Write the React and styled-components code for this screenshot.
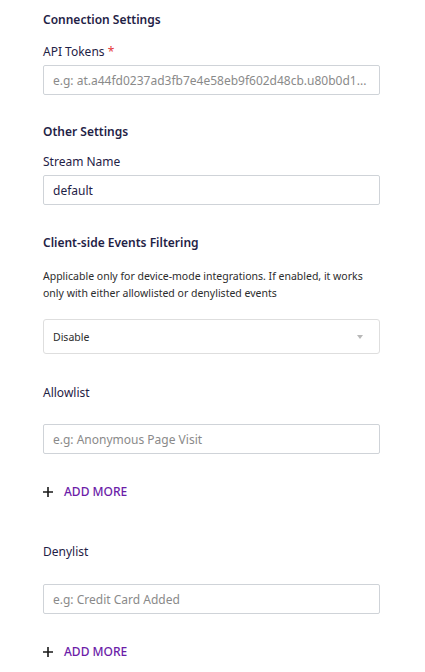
import styled, { createGlobalStyle } from 'styled-components';

const GlobalStyle = createGlobalStyle`
	body {
		margin: 0;
		background: #fff;
		font-family: 'Noto Sans', 'Open Sans', sans-serif;
		color: #1f2246;
	}
`;

const Page = styled.div`
	width: 337px;
	padding: 11px 0 0 43px;
	display: flex;
	flex-direction: column;
`;

const Heading = styled.h3`
	margin: 0;
	font-size: 12px;
	font-weight: 600;
	line-height: 18px;
	color: #1f2246;
	margin-top: ${(p) => p.top || 0}px;
`;

const Label = styled.div`
	font-size: 12px;
	font-weight: 400;
	line-height: 18px;
	color: #1f2246;
	margin-top: ${(p) => p.top || 0}px;
	margin-bottom: ${(p) => p.bottom || 4}px;
`;

const Required = styled.span`
	color: #e5373b;
`;

const Description = styled.p`
	margin: 16px 0 0;
	font-size: 10.5px;
	line-height: 17px;
	color: #2c2c2c;
`;

const Input = styled.input`
	box-sizing: border-box;
	width: 337px;
	height: 30px;
	border: 1px solid #cfd3d8;
	border-radius: 2px;
	padding: 0 9px;
	font-family: inherit;
	font-size: 12px;
	color: #1f2246;
	outline: none;
	text-overflow: ellipsis;
	&::placeholder {
		color: #8a8a8a;
	}
`;

const Select = styled.div`
	box-sizing: border-box;
	margin-top: 17px;
	width: 337px;
	height: 35px;
	border: 1px solid #dedede;
	border-radius: 3px;
	padding: 0 10px 0 9px;
	display: flex;
	align-items: center;
	justify-content: space-between;
	font-size: 10.5px;
	color: #2c2c2c;
`;

const Caret = styled.span`
	width: 0;
	height: 0;
	border-left: 3.5px solid transparent;
	border-right: 3.5px solid transparent;
	border-top: 4px solid #b8b8b8;
	margin-right: 6px;
`;

const AddMore = styled.button`
	margin-top: 29px;
	padding: 0;
	border: none;
	background: none;
	display: flex;
	align-items: center;
	gap: 11px;
	font-family: inherit;
	font-size: 12px;
	font-weight: 500;
	color: #6c1ca8;
	cursor: pointer;
`;

const Plus = styled.svg`
	width: 10px;
	height: 10px;
`;

const AddMoreButton = () => (
	<AddMore>
		<Plus viewBox="0 0 10 10">
			<path d="M5 0v10M0 5h10" stroke="#1a1a1a" strokeWidth="1.6" />
		</Plus>
		ADD MORE
	</AddMore>
);

const App = () => {
	return (
		<>
			<GlobalStyle />
			<Page>
				<Heading>Connection Settings</Heading>
				<Label top={14}>
					API Tokens <Required>*</Required>
				</Label>
				<Input placeholder="e.g: at.a44fd0237ad3fb7e4e58eb9f602d48cb.u80b0d1..." />

				<Heading top={28}>Other Settings</Heading>
				<Label top={12}>Stream Name</Label>
				<Input defaultValue="default" />

				<Heading top={29}>Client-side Events Filtering</Heading>
				<Description>
					Applicable only for device-mode integrations. If enabled, it works
					only with either allowlisted or denylisted events
				</Description>
				<Select>
					Disable
					<Caret />
				</Select>

				<Label top={30} bottom={22}>Allowlist</Label>
				<Input placeholder="e.g: Anonymous Page Visit" />
				<AddMoreButton />

				<Label top={43} bottom={23}>Denylist</Label>
				<Input placeholder="e.g: Credit Card Added" />
				<AddMoreButton />
			</Page>
		</>
	);
};

export default App;
